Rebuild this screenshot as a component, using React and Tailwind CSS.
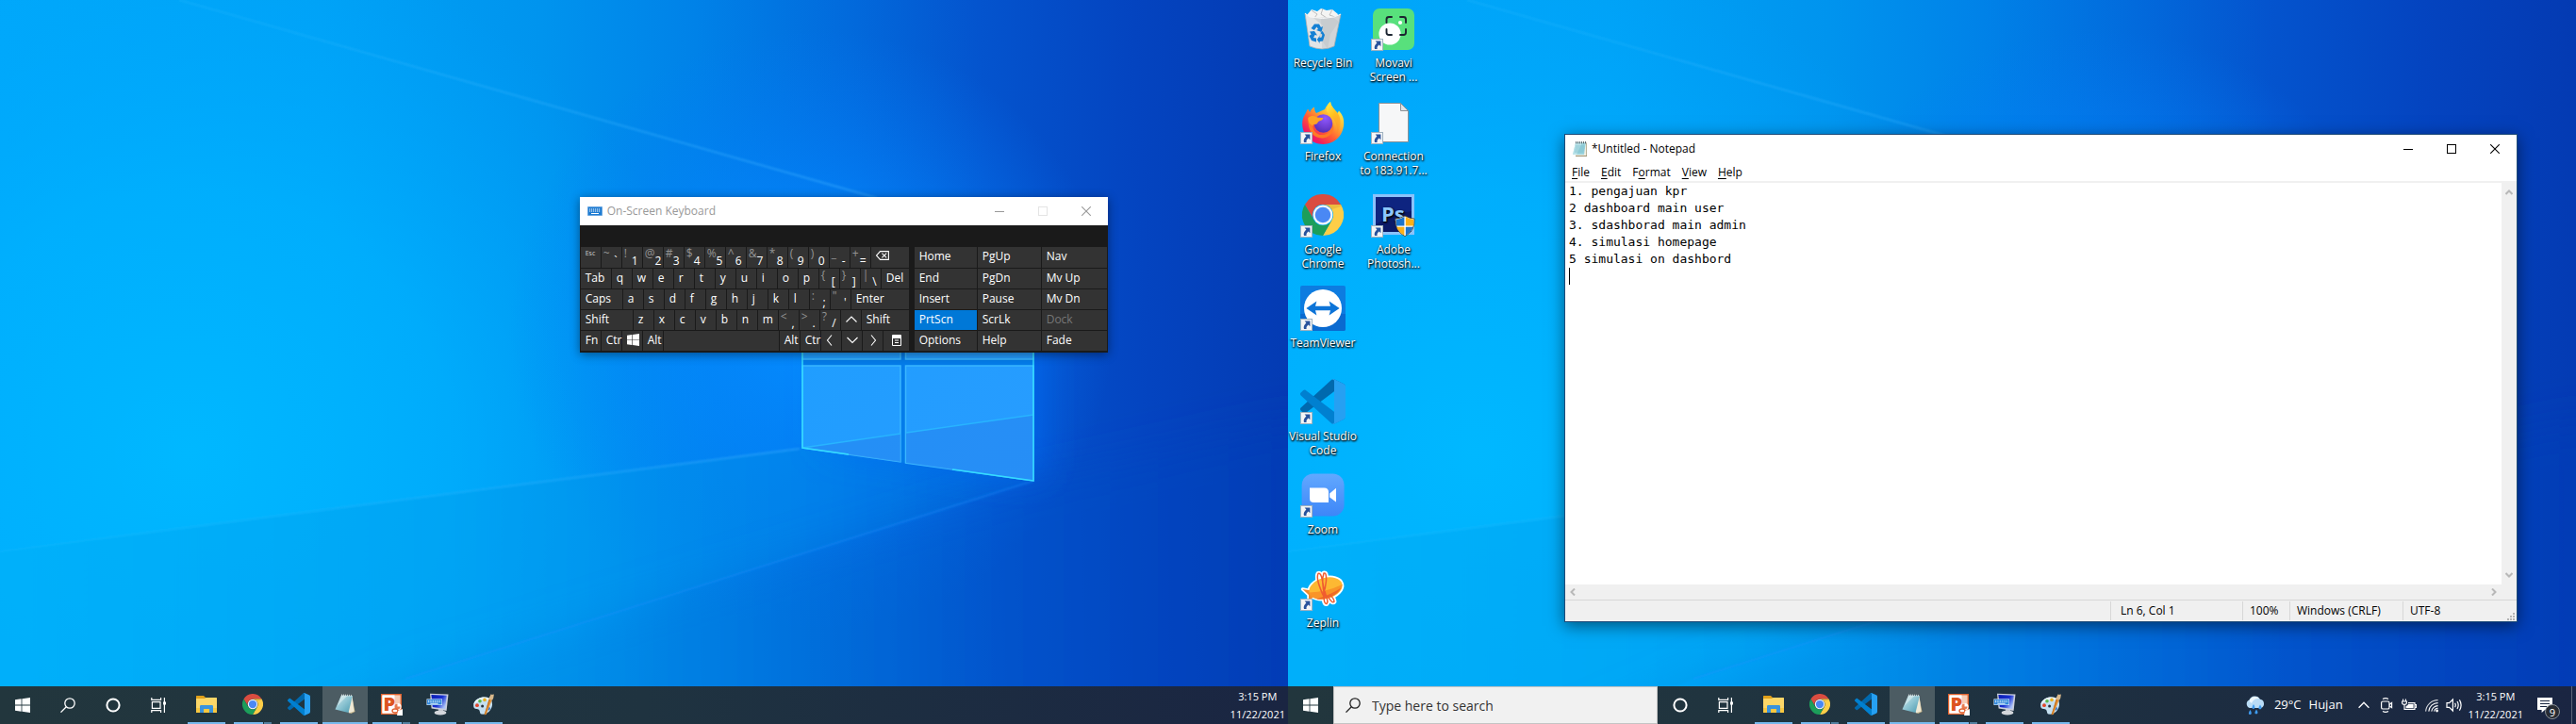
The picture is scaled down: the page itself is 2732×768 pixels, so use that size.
import { useId } from "react";

/* ---------- wallpaper ---------- */

function Wallpaper() {
  const id = useId();
  const u = (n) => `url(#${id}${n})`;
  return (
    <svg className="absolute inset-0 h-full w-full" viewBox="0 0 1366 768" preserveAspectRatio="none" aria-hidden="true">
      <defs>
        <linearGradient id={id + "base"} x1="0" y1="60" x2="1366" y2="0" gradientUnits="userSpaceOnUse">
          <stop offset="0" stopColor="#00a8fa" />
          <stop offset="0.25" stopColor="#00a2f6" />
          <stop offset="0.42" stopColor="#0094ee" />
          <stop offset="0.54" stopColor="#0082e8" />
          <stop offset="0.66" stopColor="#026adc" />
          <stop offset="0.76" stopColor="#0454ce" />
          <stop offset="0.88" stopColor="#0444c0" />
          <stop offset="1" stopColor="#043ab2" />
        </linearGradient>
        <radialGradient id={id + "cyan"} cx="200" cy="480" r="560" gradientUnits="userSpaceOnUse">
          <stop offset="0" stopColor="#00b8ff" />
          <stop offset="0.5" stopColor="#00b2ff" stopOpacity="0.7" />
          <stop offset="1" stopColor="#00a4ff" stopOpacity="0" />
        </radialGradient>
        <radialGradient id={id + "glow"} cx="860" cy="350" r="320" gradientUnits="userSpaceOnUse">
          <stop offset="0" stopColor="#058cff" />
          <stop offset="0.45" stopColor="#0486ff" stopOpacity="0.6" />
          <stop offset="1" stopColor="#0478f6" stopOpacity="0" />
        </radialGradient>
        <linearGradient id={id + "ray"} x1="0" y1="0" x2="1000" y2="0" gradientUnits="userSpaceOnUse">
          <stop offset="0" stopColor="#30c4ff" stopOpacity="0.15" />
          <stop offset="1" stopColor="#38a8ff" stopOpacity="0.6" />
        </linearGradient>
        <linearGradient id={id + "low"} x1="0" y1="0" x2="1366" y2="0" gradientUnits="userSpaceOnUse">
          <stop offset="0" stopColor="#00b0f8" />
          <stop offset="0.35" stopColor="#00a0f0" />
          <stop offset="0.62" stopColor="#0086e8" />
          <stop offset="0.8" stopColor="#0466dc" />
          <stop offset="1" stopColor="#0448c4" />
        </linearGradient>
        <linearGradient id={id + "under"} x1="0" y1="0" x2="1366" y2="0" gradientUnits="userSpaceOnUse">
          <stop offset="0.22" stopColor="#009cec" />
          <stop offset="0.45" stopColor="#0088e4" />
          <stop offset="0.62" stopColor="#006cd8" />
          <stop offset="0.8" stopColor="#0450c8" />
          <stop offset="1" stopColor="#043cb6" />
        </linearGradient>
        <linearGradient id={id + "pane"} x1="850" y1="300" x2="1096" y2="510" gradientUnits="userSpaceOnUse">
          <stop offset="0" stopColor="#1e9eff" />
          <stop offset="1" stopColor="#289cff" />
        </linearGradient>
        <filter id={id + "b1"} x="-5%" y="-5%" width="110%" height="110%">
          <feGaussianBlur stdDeviation="1" />
        </filter>
        <filter id={id + "b2"} x="-30%" y="-30%" width="160%" height="160%">
          <feGaussianBlur stdDeviation="20" />
        </filter>
      </defs>
      <rect width="1366" height="768" fill={u("base")} />
      <rect width="1366" height="768" fill={u("cyan")} />
      <rect width="1366" height="768" fill={u("glow")} />
      <path d="M-20 588 L848 476 L1096 510 L430 720 L270 790 H-20Z" fill={u("low")} fillOpacity="0.6" filter={u("b1")} />
      <path d="M1096 510 L430 720 L270 790 H1390 V440Z" fill={u("under")} fillOpacity="0.55" filter={u("b2")} />
      <path d="M190 0 L930 210" stroke={u("ray")} strokeWidth="2" filter={u("b1")} />
      <path d="M0 585 L848 476" stroke={u("ray")} strokeWidth="2" filter={u("b1")} />
      <path d="M1096 510 L430 720" stroke="#1e90ff" strokeOpacity="0.4" strokeWidth="2" filter={u("b1")} />
      <path d="M880 260 H1100 V500 L880 470Z" fill="#0468f4" fillOpacity="0.8" filter={u("b2")} />
      <path d="M850 240 H1096 V510 L850 476Z" fill="#047cea" />
      <g fill={u("pane")} stroke="#3ab6ff" strokeWidth="1.5">
        <path d="M851 260 H955 V381 H851Z" />
        <path d="M960.500 250 H1096 V381 H960.500Z" />
        <path d="M851 388 H955 V490 L851 475Z" />
        <path d="M960.500 388 H1096 V510 L960.500 491Z" />
      </g>
      <path d="M851 475 L955 460 V490Z M961 459 L1096 440 V510 L961 491Z" fill="#2684ee" fillOpacity="0.55" />
      <path d="M851 475 L955 460 M961 459 L1096 440" stroke="#28b4ff" strokeWidth="1.500" />
      <path d="M851 300 V475 L900 482 M1096 250 V510 L1010 498" fill="none" stroke="#34dcff" strokeWidth="1.500" />
    </svg>
  );
}

/* ---------- icons ---------- */

function WindowsLogo({ className }) {
  return (
    <svg className={className} viewBox="0 0 16 16" fill="currentColor" aria-hidden="true">
      <path d="M0 2.2 6.6 1.3V7.6H0ZM7.4 1.2 16 0V7.6H7.4ZM0 8.4H6.6V14.7L0 13.8ZM7.4 8.4H16V16L7.4 14.8Z" />
    </svg>
  );
}

function SearchIcon() {
  return (
    <svg className="size-4 shrink-0" viewBox="0 0 16 16" fill="none" stroke="currentColor" strokeWidth="1.3" aria-hidden="true">
      <circle cx="10" cy="6" r="5.2" />
      <path d="M6.3 9.8.5 15.6" />
    </svg>
  );
}

function CortanaIcon() {
  return (
    <svg className="size-4" viewBox="0 0 16 16" fill="none" stroke="currentColor" strokeWidth="2" aria-hidden="true">
      <circle cx="8" cy="8" r="6.6" />
    </svg>
  );
}

function TaskViewIcon() {
  return (
    <svg className="size-4" viewBox="0 0 16 16" fill="none" stroke="currentColor" strokeWidth="1.2" aria-hidden="true">
      <path d="M.8 0V2.4H10.6V0M.8 16V13.6H10.6V16M1.4 4.6H10V11.4H1.4ZM14.4 0V16" />
      <path d="M13 4.5H16V7.5H13Z" fill="currentColor" stroke="none" />
    </svg>
  );
}

function FolderIcon() {
  return (
    <svg className="size-6" viewBox="0 0 24 24" aria-hidden="true">
      <path d="M1 3.4Q1 3 1.4 3H9L11 5H21V8H1Z" fill="#e0a01a" />
      <path d="M1 6H10L11.5 5H22.6Q23 5 23 5.4V20.6Q23 21 22.6 21H1.4Q1 21 1 20.6Z" fill="#fcd768" />
      <path d="M1 16H23V20.6Q23 21 22.6 21H1.4Q1 21 1 20.6Z" fill="#f9c840" />
      <path d="M5 21V14.2Q5 13 6.2 13H17.8Q19 13 19 14.2V21H15V17H9V21Z" fill="#3a93dd" />
    </svg>
  );
}

function ChromeIcon({ className }) {
  return (
    <svg className={className} viewBox="0 0 48 48" aria-hidden="true">
      <path d="M24 12H44.8A24 24 0 0 0 3.2 12L13.6 30A12 12 0 0 1 24 12Z" fill="#da4c40" />
      <path d="M34.4 30 24 48A24 24 0 0 0 44.8 12H24A12 12 0 0 1 34.4 30Z" fill="#fdce48" />
      <path d="M13.6 30 3.2 12A24 24 0 0 0 24 48L34.4 30A12 12 0 0 1 13.6 30Z" fill="#1c9e5a" />
      <path d="M24 12H44.8L45.6 14 34 17.6Z" fill="#c99a30" fillOpacity="0.35" />
      <circle cx="24" cy="24" r="11.4" fill="#f4f6f8" />
      <circle cx="24" cy="24" r="9" fill="#4a88f4" />
    </svg>
  );
}

function VSCodeIcon({ className }) {
  return (
    <svg className={className} viewBox="0 0 100 100" aria-hidden="true">
      <path d="M96.46 10.8 75.86.88C73.47-.27 70.62.21 68.75 2.08L1.3 63.58C-.52 65.24-.51 68.09 1.3 69.75L6.81 74.75C8.3 76.1 10.53 76.2 12.13 74.99L93.36 13.37C96.09 11.3 100 13.25 100 16.67V16.43C100 14.03 98.62 11.84 96.46 10.8Z" fill="#0069ae" />
      <path d="M96.46 89.2 75.86 99.12C73.47 100.27 70.62 99.79 68.75 97.92L1.3 36.42C-.52 34.76-.51 31.91 1.3 30.25L6.81 25.25C8.3 23.9 10.53 23.8 12.13 25.01L93.36 86.63C96.09 88.7 100 86.75 100 83.33V83.57C100 85.97 98.62 88.16 96.46 89.2Z" fill="#0080d0" />
      <path d="M75.86 99.13C73.47 100.27 70.62 99.79 68.75 97.92 71.06 100.22 75 98.59 75 95.33V4.67C75 1.41 71.06-.22 68.75 2.08 70.62.21 73.47-.27 75.86.87L96.46 10.78C98.62 11.82 100 14.01 100 16.41V83.59C100 85.99 98.62 88.18 96.46 89.22Z" fill="#26a0f2" />
    </svg>
  );
}

function NotepadTaskIcon() {
  const id = useId();
  return (
    <svg className="size-6" viewBox="0 0 24 24" aria-hidden="true">
      <defs>
        <linearGradient id={id} x1="0" y1="0" x2="1" y2="1">
          <stop offset="0" stopColor="#cfe6ea" />
          <stop offset="0.5" stopColor="#8cc4d2" />
          <stop offset="1" stopColor="#4a98ae" />
        </linearGradient>
      </defs>
      <path d="M19 3 22.5 20 18 22 15.5 20Z" fill="#cdbb8e" />
      <path d="M19.5 3 21.5 19.5 16 21.5 15 19Z" fill="#efe9d6" />
      <path d="M8 2.5 20 3 15.5 21 1.5 17.5Z" fill={`url(#${id})`} />
      <path d="M3.5 14 8 2.8 14.5 3Z" fill="#e4f2f4" fillOpacity="0.55" />
      <path d="M8.5 1.5V3.4M10.5 1.5V3.5M12.5 1.6V3.5M14.5 1.7V3.6M16.5 1.8V3.7M18.5 1.9V3.8" stroke="#dfe5e5" strokeWidth="0.8" />
    </svg>
  );
}

function NotepadTitleIcon() {
  return (
    <svg className="size-4" viewBox="0 0 16 16" aria-hidden="true">
      <path d="M4 1.5H15V16H3Z" fill="#9a9070" />
      <path d="M4 1.5H14.4V15H3Z" fill="#f1eee2" />
      <path d="M3 1.5H13.8L12 14H0Z" fill="#9bd4de" />
      <path d="M3 1.5H10L4 14H0Z" fill="#c8e9ee" fillOpacity="0.7" />
      <path d="M3 5H12.6M2.6 7H12.4M2.2 9H12M1.8 11H11.6" stroke="#6cb4c4" strokeWidth="0.6" />
      <path d="M3.5 0V2.4M5.5 0V2.4M7.5 0V2.4M9.5 0V2.4M11.5 0V2.4M13.5 0V2.4" stroke="#41525a" strokeWidth="0.8" />
    </svg>
  );
}

function PowerPointIcon() {
  return (
    <svg className="size-6" viewBox="0 0 24 24" aria-hidden="true">
      <rect x="1" y="1" width="22" height="22" fill="#e0622e" />
      <rect x="2.4" y="2.4" width="19.2" height="19.2" fill="#f6cdb8" />
      <path d="M2.4 2.4H15.500V21.600H2.400Z" fill="#fff" />
      <text x="3.400" y="18.600" fontFamily="Open Sans, sans-serif" fontWeight="800" fontSize="20" fill="#dd5420">P</text>
      <circle cx="19" cy="14.500" r="3.600" fill="#fff" />
      <path d="M18.500 14.500V11.500A3 3 0 1 0 21.500 14.500Z" fill="#e87a50" />
      <ellipse cx="16" cy="19" rx="3" ry="2" fill="#fff" stroke="#e06030" strokeWidth="1.300" />
      <path d="M19 19.500 24 17V24H18Z" fill="#fff" />
    </svg>
  );
}

function OskTaskIcon() {
  const id = useId();
  return (
    <svg className="size-6" viewBox="0 0 24 24" aria-hidden="true">
      <defs>
        <linearGradient id={id} x1="0" y1="0" x2="1" y2="0.6">
          <stop offset="0" stopColor="#0a1cb4" />
          <stop offset="0.6" stopColor="#1830d0" />
          <stop offset="1" stopColor="#a8c0f8" />
        </linearGradient>
      </defs>
      <path d="M13 17H18V21H13Z" fill="#b8bcc4" />
      <ellipse cx="15" cy="21" rx="6.4" ry="2.4" fill="#d4d7dc" />
      <path d="M4 .8 23.5 1.5 21.6 19 5.6 16.4Z" fill="#ccd0dc" />
      <path d="M5.4 2 21.8 2.8 20.2 17 6.8 15Z" fill={`url(#${id})`} />
      <path d="M.5 6.4H17V13H.5Z" fill="#dcecfc" />
      <path d="M1.1 7H16.4V12.4H1.1Z" fill="#2a84da" />
      <path d="M2 8.4H15.6M2 9.8H15.6" stroke="#fff" strokeWidth="0.8" strokeDasharray="1 0.7" />
      <path d="M4.4 11.3H12.6" stroke="#fff" strokeWidth="0.8" />
    </svg>
  );
}

function PaintIcon() {
  return (
    <svg className="size-6" viewBox="0 0 24 24" aria-hidden="true">
      <path d="M11 4.6C18 3.6 21.6 8 21 13 20.2 19 15 23.4 9.6 22.6 7.4 22.2 8.6 18.6 6.4 17.6 4.4 16.8 1.6 17.6 1.2 14 .8 9 5.4 5.4 11 4.6Z" fill="#c4dff0" />
      <path d="M11 4.6C16 4 19.6 6 20.8 9.6 16 5.6 8 6 1.4 12.4 2 8.4 6 5.3 11 4.6Z" fill="#eaf5fb" />
      <circle cx="5" cy="13.2" r="1.9" fill="#e2452a" />
      <circle cx="8" cy="8.8" r="1.8" fill="#58b84a" />
      <circle cx="13" cy="7.4" r="1.8" fill="#e8b020" />
      <circle cx="10.6" cy="14" r="1.5" fill="#26323e" />
      <circle cx="17" cy="16.6" r="1.9" fill="#2d78d6" />
      <path d="M12.6 23.2 17.8 6.6 20.8 7.6 14.6 23Z" fill="#e8963a" />
      <path d="M12.6 23.2 17.8 6.6 19 7 13.6 23Z" fill="#c26e1c" />
      <path d="M17.6 6.8C17.4 4.4 19 3.6 19.6 1.2 20.4 2.4 21.4 1.6 23 1.4 22.2 3.4 23.2 4.8 21 7.8Z" fill="#d9b98c" />
    </svg>
  );
}

function RecycleBinIcon() {
  return (
    <svg className="size-12" viewBox="0 0 48 48" aria-hidden="true">
      <path d="M7 10 12 4 18 6 22 3 28 5 34 4 40 9 38 15H8Z" fill="#f4f4f3" />
      <path d="M12 5 18 9 15 13M24 3 22 9 28 13M34 4 31 10 37 12" fill="none" stroke="#bcbcbc" strokeWidth="1" />
      <path d="M5 8 10 43Q24 49 36 43L43 9 35 12 22 13.5 10 12Z" fill="#d2d5d8" />
      <path d="M5 8 10 43Q16 46 23 46L22 13.5 10 12Z" fill="#e2e4e6" />
      <path d="M14 13 24 21 20 32 29 46 32 30 41 17 34 12Z" fill="#c0c4c8" fillOpacity="0.55" />
      <path d="M5 8 10 43Q24 49 36 43L43 9" fill="none" stroke="#a3adb4" strokeWidth="0.8" />
      <path d="M5 8 10 12Q24 15 36 12L43 9" fill="none" stroke="#f6f7f8" strokeWidth="1" />
      <g fill="#1480d4">
        <path d="M11.5 24 15 19.5H20L22 23 24 22 22.5 28 17 26 19 25 17.5 22.5 14.8 26Z" />
        <path d="M10 27.5 15 27 18 31.5 15.6 31 14 34 17 34.5V38.5L12 37 9.4 32 11.6 30.5Z" />
        <path d="M23.6 27 26 31 24 37.5 20.6 38V40L17.8 36 20.6 32V34L22.6 33.5 23.4 30.8 21.4 29Z" />
      </g>
    </svg>
  );
}

function MovaviIcon() {
  return (
    <svg className="size-12" viewBox="0 0 48 48" aria-hidden="true">
      <rect x="2" y="3" width="44" height="44" rx="7" fill="#58e07c" />
      <circle cx="20" cy="30" r="11.6" fill="#fff" />
      <path d="M16.5 18V14.5Q16.5 12 19 12H22M31 12H34.5Q37 12 37 14.5V18M37 25V28.5Q37 31 34.5 31H31M22 31H19Q16.5 31 16.5 28.5V25" fill="none" stroke="#1c2430" strokeWidth="1.9" strokeLinecap="round" />
      <circle cx="31" cy="18" r="2.1" fill="#fff" />
    </svg>
  );
}

function FirefoxIcon() {
  const id = useId();
  return (
    <svg className="size-12" viewBox="0 0 48 48" aria-hidden="true">
      <defs>
        <linearGradient id={id + "f"} x1="0.85" y1="0.1" x2="0.15" y2="0.95">
          <stop offset="0" stopColor="#fff44f" />
          <stop offset="0.3" stopColor="#ffb430" />
          <stop offset="0.6" stopColor="#ff5a36" />
          <stop offset="0.85" stopColor="#f01c60" />
          <stop offset="1" stopColor="#e31587" />
        </linearGradient>
        <linearGradient id={id + "y"} x1="0" y1="0" x2="0.4" y2="1">
          <stop offset="0" stopColor="#fff050" />
          <stop offset="0.5" stopColor="#ffc020" />
          <stop offset="1" stopColor="#ff8020" stopOpacity="0.2" />
        </linearGradient>
        <radialGradient id={id + "g"} cx="0.6" cy="0.2" r="0.9">
          <stop offset="0" stopColor="#9059ff" />
          <stop offset="0.6" stopColor="#6c3cd0" />
          <stop offset="1" stopColor="#4a2cae" />
        </radialGradient>
      </defs>
      <path d="M8 10.5C9 12 9.6 13 10.2 14 11 11.6 13 9.6 15 8.6 14.8 10.6 15.4 13.4 17 15L26 11C27.6 7.4 29.6 5 32 3 32.4 8 37 11.6 39.6 15L41 12.6C45 17 46.4 21 46.2 26.6 45.4 39.4 36 48 24.4 48 11.4 48 2.4 38.6 2.2 26.6 2 20 5 17 6 14.4Z" fill={`url(#${id}f)`} />
      <path d="M28 13C27.6 8 29.6 5 32 3 32.4 8 37 11.6 39.6 15 44 21 43.6 31 38 38 41 28 36 21 32 18.4Z" fill={`url(#${id}y)`} />
      <path d="M8.400 20C11 17.600 14.600 17.400 17.600 19.200 19.600 20 22 19.800 24.400 20 24 22.200 21.600 23 20 23.600 18.400 24.400 18.600 26 17.200 26.600 15 27.600 13.400 26.200 13.400 28.400 13 33 18 38.400 23 38 30 38 34.600 33 34 26 37.400 31 34 40.600 24 41.400 14 42 7.600 34 8.400 20Z" fill="#ff7a26" />
      <circle cx="24.500" cy="26" r="9.800" fill={`url(#${id}g)`} />
      <path d="M8.400 20C11 17.600 14.600 17.400 17.600 19.200 19.600 20 22 19.800 24.400 20 24 22.200 21.600 23 20 23.600 18.400 24.400 18.600 26 17.200 26.600 15 27.600 13.400 26.200 13.400 28.400 10 27 8 24 8.400 20Z" fill="#ffa224" />
    </svg>
  );
}

function BlankFileIcon() {
  return (
    <svg className="size-12" viewBox="0 0 48 48" aria-hidden="true">
      <path d="M8.5 4.5H31L39.5 13V45.5H8.5Z" fill="#f6f7f8" stroke="#8b9196" />
      <path d="M31.5 4.5V12.5H39.5Z" fill="#e0e4e8" stroke="#8b9196" strokeLinejoin="round" />
    </svg>
  );
}

function PhotoshopIcon() {
  return (
    <svg className="size-12" viewBox="0 0 48 48" aria-hidden="true">
      <rect x="2" y="2" width="44" height="43" fill="#8cc2fa" />
      <rect x="5" y="5" width="38" height="37" fill="#0b1a68" />
      <path d="M5 5H43V20Q24 22 5 34Z" fill="#0e2480" />
      <text x="11" y="31" fontFamily="Open Sans, sans-serif" fontWeight="700" fontSize="22" fill="#8cc6fc">Ps</text>
      <path d="M36 25Q41 28 46 28 47 41 36 46.6 25 41 26 28 31 28 36 25Z" fill="#fff" stroke="#4a3a14" strokeWidth="0.8" />
      <path d="M35.4 26Q31 28.8 26.8 28.8V35.4H35.4ZM36.8 36.8H44.6Q43 42.6 36.8 45.6Z" fill="#1c74cc" />
      <path d="M36.8 26Q41 28.8 45.2 28.8V35.4H36.8ZM35.4 36.8H27.4Q29 42.6 35.4 45.6Z" fill="#fbb018" />
    </svg>
  );
}

function TeamViewerIcon() {
  return (
    <svg className="size-12" viewBox="0 0 48 48" aria-hidden="true">
      <rect width="48" height="48" rx="2" fill="#0d7ce0" />
      <path d="M0 30H48V46Q48 48 46 48H2Q0 48 0 46Z" fill="#0a6ad0" />
      <circle cx="24" cy="24" r="20" fill="#fff" />
      <path d="M6.4 24 17.4 16.6 16 21.8H32L30.6 16.6 41.6 24 30.6 31.4 32 26.2H16L17.4 31.4Z" fill="#0d74d8" />
    </svg>
  );
}

function ZoomIcon() {
  const id = useId();
  return (
    <svg className="size-12" viewBox="0 0 48 48" aria-hidden="true">
      <defs>
        <linearGradient id={id} x1="0" y1="0" x2="0" y2="1">
          <stop offset="0" stopColor="#62a8ff" />
          <stop offset="1" stopColor="#3d86f8" />
        </linearGradient>
      </defs>
      <rect x="1.6" y="1.6" width="45" height="45" rx="12" fill={`url(#${id})`} />
      <path d="M10 16.4H25.4Q30 16.4 30 21V32H14.4Q10 32 10 27.4Z" fill="#fff" />
      <path d="M31.2 22.4 38 16.8V31.6L31.2 26.4Z" fill="#fff" />
    </svg>
  );
}

function ZeplinIcon() {
  const wings = "M25.500 34Q16 14 19 8.500 22 7 23.500 16 25 26 28 34M26 33Q22 16 25 8 28 7 27.500 16 27 24 24 31M25 32Q25 41 28 40.500 30 38 27.500 33M29 32Q34 41 36 38 35.500 34 31 31";
  return (
    <svg className="size-12" viewBox="0 0 48 48" aria-hidden="true">
      <g fill="#fff" stroke="#fff" strokeWidth="3.500" strokeLinejoin="round">
        <path d="M2.500 25 10 26.500 12 33 9 38 9 31Z" />
        <ellipse cx="27" cy="24" rx="18" ry="11" transform="rotate(-15 27 24)" />
      </g>
      <path d={wings} fill="none" stroke="#fff" strokeWidth="5" strokeLinejoin="round" />
      <path d="M2.500 25 12 26.500 14 33 9 38 9 31Z" fill="#f08a2c" />
      <ellipse cx="27" cy="24" rx="18" ry="11" transform="rotate(-15 27 24)" fill="#fdb833" />
      <path d="M9.600 28.600Q28 28 44.600 20C44 27 36 32.600 27 34.800 17 37 10 34 9.600 28.600Z" fill="#f99428" />
      <path d="M17 35.500Q34 30 43.400 23.500C40 30 34 33 27 34.800Q21 36.200 17 35.500Z" fill="#ee6a28" />
      <path d={wings} fill="none" stroke="#f05c30" strokeWidth="1.500" />
    </svg>
  );
}

function ShortcutArrow() {
  return (
    <svg className="absolute bottom-0 left-0 size-[13px]" viewBox="0 0 13 13" aria-hidden="true">
      <rect x="0.5" y="0.5" width="12" height="12" fill="#f4f5f6" stroke="#9fb2c0" />
      <path d="M4.6 2.4H10.4V8.2L8.6 6.6C7 7.8 6.2 9 6.6 11H4C3 8.4 4.4 6.2 6.4 4.4Z" fill="#28529c" />
    </svg>
  );
}

/* ---------- taskbar ---------- */

const pinned = [
  { name: "File Explorer", icon: <FolderIcon />, mode: "single" },
  { name: "Google Chrome", icon: <ChromeIcon className="size-[22px]" />, mode: "stack" },
  { name: "Visual Studio Code", icon: <VSCodeIcon className="size-6" />, mode: "single" },
  { name: "Notepad", icon: <NotepadTaskIcon />, mode: "active" },
  { name: "PowerPoint", icon: <PowerPointIcon />, mode: "stack" },
  { name: "On-Screen Keyboard", icon: <OskTaskIcon />, mode: "single" },
  { name: "Paint", icon: <PaintIcon />, mode: "single" },
];

function BarButton({ label, children }) {
  return (
    <button type="button" aria-label={label} className="flex h-10 w-12 shrink-0 items-center justify-center">
      {children}
    </button>
  );
}

function PinnedApps() {
  return (
    <div className="ml-[3px] flex gap-px">
      {pinned.map((app) => (
        <button
          key={app.name}
          type="button"
          aria-label={app.name}
          className={
            "flex h-10 w-12 shrink-0 flex-col items-center " + (app.mode === "active" ? "bg-[#4c5c63]" : "")
          }
        >
          <span className="flex flex-1 items-center">{app.icon}</span>
          <span className={"flex h-0.5 gap-px " + (app.mode === "active" ? "w-full" : "w-10")}>
            <span className="flex-1 bg-[#76b9ed]" />
            {app.mode === "stack" && <span className="w-2 bg-[#527f9f]" />}
          </span>
        </button>
      ))}
    </div>
  );
}

function Clock() {
  return (
    <button type="button" className="h-10 px-[3px] text-center text-[11px] leading-[19px] whitespace-nowrap">
      3:15 PM
      <br />
      11/22/2021
    </button>
  );
}

function Tray() {
  return (
    <div className="ml-auto flex h-10 items-center">
      <button type="button" className="mr-2.5 flex items-center gap-2 text-[13px]">
        <svg className="size-6" viewBox="0 0 24 24" aria-hidden="true">
          <path d="M6 15A5 4.6 0 0 1 5.4 6.6 6.4 6.4 0 0 1 17 5.8 4.8 4.8 0 0 1 18 15Z" fill="#b9dcf6" />
          <path d="M5.6 8A6 6 0 0 1 16 5 8 8 0 0 0 8 10Z" fill="#eef8ff" />
          <path d="M10 11Q11.8 13.4 11.4 15A1.7 1.7 0 0 1 8.4 15Q8.4 13.4 10 11ZM17 11.4Q18.8 13.8 18.4 15.4A1.7 1.7 0 0 1 15.4 15.4Q15.4 13.8 17 11.4ZM6.4 17Q8.2 19.4 7.8 21A1.7 1.7 0 0 1 4.8 21Q4.8 19.4 6.4 17ZM13 16.4Q14.8 18.8 14.4 20.4A1.7 1.7 0 0 1 11.4 20.4Q11.4 18.8 13 16.4Z" fill="#3f9cf0" />
        </svg>
        <span>29°C</span>
        <span>Hujan</span>
      </button>
      <button type="button" aria-label="Show hidden icons" className="flex w-6 justify-center">
        <svg className="h-2 w-3" viewBox="0 0 12 8" fill="none" stroke="currentColor" strokeWidth="1.3">
          <path d="M.6 6.8 6 1.2 11.4 6.8" />
        </svg>
      </button>
      <button type="button" aria-label="Meet Now" className="flex w-6 justify-center">
        <svg className="size-4" viewBox="0 0 16 16" fill="none" stroke="currentColor" strokeWidth="1.2">
          <path d="M4 1.6Q7 -.2 10 1.6M4 14.4Q7 16.2 10 14.4" />
          <rect x="2.6" y="4" width="8.4" height="8" rx="1.6" />
          <path d="M11 7.4 13.6 5.4V10.6L11 8.8" />
        </svg>
      </button>
      <button type="button" aria-label="Battery" className="flex w-6 justify-center">
        <svg className="size-4" viewBox="0 0 16 16" fill="none" stroke="currentColor" strokeWidth="1.1">
          <path d="M1.6 1.500V4M4.400 1.500V4M.6 4H5.400V5.600Q5.400 7.400 3 7.400 .6 7.400 .6 5.600ZM3 7.400V12.400H14V5.600H7" />
          <path d="M14 7.600H15.600V10.400H14" />
          <path d="M7 7H12.600V11H4.600V9Q6.800 8.600 7 7Z" fill="currentColor" stroke="none" />
        </svg>
      </button>
      <button type="button" aria-label="Wi-Fi" className="flex w-6 justify-center">
        <svg className="size-4" viewBox="0 0 16 16" fill="none" stroke="currentColor" strokeWidth="1.1">
          <path d="M1.6 14.6A13 13 0 0 1 14.6 2.6" strokeOpacity="0.8" />
          <path d="M4.8 14.6A9.8 9.8 0 0 1 14.6 5.6M7.8 14.6A6.8 6.8 0 0 1 14.6 8.6M10.6 14.6A4 4 0 0 1 14.6 11.2" />
          <circle cx="13.6" cy="14" r="1.4" fill="currentColor" stroke="none" />
        </svg>
      </button>
      <button type="button" aria-label="Volume" className="flex w-6 justify-center">
        <svg className="h-4 w-[18px]" viewBox="0 0 18 16" fill="none" stroke="currentColor" strokeWidth="1.2">
          <path d="M1 5.6H3.6L7.4 2V14L3.6 10.4H1Z" />
          <path d="M9.6 5.8Q11 8 9.6 10.2M12 4Q14.4 8 12 12M14.4 2.4Q17.8 8 14.4 13.6" />
        </svg>
      </button>
      <Clock />
      <button type="button" aria-label="9 new notifications" className="relative flex h-10 w-12 items-center justify-center pr-2">
        <svg className="size-4" viewBox="0 0 16 16" aria-hidden="true">
          <path d="M0 0H16V13H8L4.6 16V13H0Z" fill="#fff" />
          <path d="M3 3.5H13M3 6.5H13M3 9.5H10" stroke="#1b2740" strokeWidth="1.2" />
        </svg>
        <span className="absolute top-[19px] left-[20px] flex size-4 items-center justify-center rounded-full border border-[#8a8f96] bg-[#272b33] text-[11px] leading-none">
          9
        </span>
      </button>
      <span className="h-10 w-[5px] border-l border-[#5d6678]" />
    </div>
  );
}

function Taskbar({ primary }) {
  return (
    <footer className="relative z-10 flex h-10 w-full items-center bg-linear-to-r from-[#22363d] via-[#1f3340] to-[#1a2542] text-white">
      <BarButton label="Start">
        <WindowsLogo className="size-4" />
      </BarButton>
      {primary ? (
        <label className="flex h-10 w-[344px] items-center gap-3 border border-[#c4c4c4] bg-[#f1f1f1] pl-3 text-[#222]">
          <SearchIcon />
          <input
            type="text"
            aria-label="Search"
            placeholder="Type here to search"
            className="w-full min-w-0 bg-transparent text-[14px] outline-none placeholder:text-[#333]"
          />
        </label>
      ) : (
        <BarButton label="Search">
          <SearchIcon />
        </BarButton>
      )}
      <BarButton label="Cortana">
        <CortanaIcon />
      </BarButton>
      <BarButton label="Task View">
        <TaskViewIcon />
      </BarButton>
      <PinnedApps />
      {primary ? (
        <Tray />
      ) : (
        <div className="ml-auto">
          <Clock />
        </div>
      )}
    </footer>
  );
}

/* ---------- windows ---------- */

function WindowButtons({ dimMax }) {
  const box = "flex h-full w-[46px] items-center justify-center";
  return (
    <div className="ml-auto flex h-full">
      <button type="button" aria-label="Minimize" className={box}>
        <svg className="size-2.5" viewBox="0 0 10 10" stroke="currentColor">
          <path d="M0 5.5H10" />
        </svg>
      </button>
      <button type="button" aria-label="Maximize" className={box + (dimMax ? " text-[#e4e4e4]" : "")}>
        <svg className="size-2.5" viewBox="0 0 10 10" fill="none" stroke="currentColor">
          <rect x="0.5" y="0.5" width="9" height="9" />
        </svg>
      </button>
      <button type="button" aria-label="Close" className={box}>
        <svg className="size-2.5" viewBox="0 0 10 10" stroke="currentColor" strokeWidth="1.1">
          <path d="M.2.2 9.8 9.8M9.8.2.2 9.8" />
        </svg>
      </button>
    </div>
  );
}

const S = "w-[21px] shrink-0";
const keyBase = "flex pl-[5px] text-left leading-[19px] whitespace-nowrap";

function Chevron({ d }) {
  return (
    <svg className="mt-1 size-3 shrink-0" viewBox="0 0 12 12" fill="none" stroke="currentColor" strokeWidth="1.1" aria-hidden="true">
      <path d={d} />
    </svg>
  );
}

const up = <Chevron d="M.5 8.5 6 3 11.5 8.5" />;
const down = <Chevron d="M.5 3 6 8.5 11.5 3" />;
const left = <Chevron d="M6 .5 1.5 6 6 11.5" />;
const right = <Chevron d="M4 .5 8.5 6 4 11.5" />;

const rows = [
  [
    { k: "Esc", tiny: true },
    { k: "`", s: "~" },
    { k: "1", s: "!" },
    { k: "2", s: "@" },
    { k: "3", s: "#" },
    { k: "4", s: "$" },
    { k: "5", s: "%" },
    { k: "6", s: "^" },
    { k: "7", s: "&" },
    { k: "8", s: "*" },
    { k: "9", s: "(" },
    { k: "0", s: ")" },
    { k: "-", s: "_" },
    { k: "=", s: "+" },
    {
      label: "Backspace",
      w: "flex-1",
      icon: (
        <svg className="mt-1 h-2.5 w-3.5 shrink-0" viewBox="0 0 14 10" fill="none" stroke="currentColor" strokeWidth="1.1" aria-hidden="true">
          <path d="M4.5.6H13.4V9.4H4.5L.6 5ZM6.4 2.6 11.2 7.4M11.2 2.6 6.4 7.4" />
        </svg>
      ),
    },
  ],
  [
    { k: "Tab", w: "w-8 shrink-0" },
    ..."qwertyuiop".split("").map((k) => ({ k })),
    { k: "[", s: "{" },
    { k: "]", s: "}" },
    { k: "\\", s: "|" },
    { k: "Del", w: "flex-1" },
  ],
  [
    { k: "Caps", w: "w-11 shrink-0" },
    ..."asdfghjkl".split("").map((k) => ({ k })),
    { k: ";", s: ":" },
    { k: "'", s: '"' },
    { k: "Enter", w: "flex-1" },
  ],
  [
    { k: "Shift", w: "w-[55px] shrink-0" },
    ..."zxcvbnm".split("").map((k) => ({ k })),
    { k: ",", s: "<" },
    { k: ".", s: ">" },
    { k: "/", s: "?" },
    { label: "Up", icon: up },
    { k: "Shift", w: "flex-1" },
  ],
  [
    { k: "Fn" },
    { k: "Ctrl" },
    { label: "Windows", icon: <WindowsLogo className="mt-[3px] size-[13px] shrink-0" /> },
    { k: "Alt" },
    { label: "Space", w: "flex-1" },
    { k: "Alt" },
    { k: "Ctrl" },
    { label: "Left", icon: left },
    { label: "Down", icon: down },
    { label: "Right", icon: right },
    {
      label: "Menu",
      w: "w-[27px] shrink-0",
      icon: (
        <svg className="mt-1 ml-1 h-3 w-2.5 shrink-0" viewBox="0 0 10 12" fill="none" stroke="currentColor" aria-hidden="true">
          <path d="M.5.5H9.5V11.5H.5ZM.5 3.5H9.5M3 6H7M3 8.5H7" />
          <path d="M.5 2H9.5" strokeWidth="2" />
        </svg>
      ),
    },
  ],
];

function Key({ def }) {
  if (def.s) {
    return (
      <button type="button" className={"flex justify-between bg-[#333] px-0.5 leading-[14px] " + S}>
        <span className="text-[#949494]">{def.s}</span>
        <span className="self-end pr-0.5">{def.k}</span>
      </button>
    );
  }
  return (
    <button type="button" aria-label={def.label} className={keyBase + " bg-[#333] " + (def.w || S)}>
      {def.tiny ? <span className="text-[7px] leading-[13px] text-[#ccc]">{def.k}</span> : def.icon || def.k}
    </button>
  );
}

const sideKeys = [
  ["Home", "PgUp", "Nav"],
  ["End", "PgDn", "Mv Up"],
  ["Insert", "Pause", "Mv Dn"],
  ["PrtScn", "ScrLk", "Dock"],
  ["Options", "Help", "Fade"],
];

function sideTone(k) {
  if (k === "PrtScn") return " bg-[#0078d7]";
  if (k === "Dock") return " bg-[#333] text-[#777]";
  return " bg-[#333]";
}

function OnScreenKeyboard() {
  return (
    <section className="absolute top-[209px] left-[45%] w-[560px] bg-[#1a1a1a] text-[12px] text-white shadow-[0_2px_10px_rgba(0,0,0,0.45)]">
      <header className="flex h-[30px] items-center bg-white pl-2 text-[#999]">
        <svg className="h-2.5 w-4" viewBox="0 0 16 10" aria-hidden="true">
          <rect width="16" height="10" fill="#9cc4ea" />
          <rect x="0.6" y="0.6" width="14.8" height="8.8" fill="#1e7cd2" />
          <path d="M2 3H14M2 5H14" stroke="#fff" strokeDasharray="1.2 0.8" />
          <path d="M4 7.5H12" stroke="#fff" />
        </svg>
        <h2 className="ml-[5px]">On-Screen Keyboard</h2>
        <WindowButtons dimMax />
      </header>
      <div className="flex gap-1.5 px-px pt-[23px] pb-0.5">
        <div className="grid w-[348px] shrink-0 grid-rows-[22px_repeat(4,21px)] gap-px">
          {rows.map((row, i) => (
            <div key={i} className="flex gap-px">
              {row.map((def, j) => (
                <Key key={j} def={def} />
              ))}
            </div>
          ))}
        </div>
        <div className="grid flex-1 grid-cols-[66px_67px_1fr] grid-rows-[22px_repeat(4,21px)] gap-px">
          {sideKeys.flat().map((k) => (
            <button key={k} type="button" disabled={k === "Dock"} className={keyBase + sideTone(k)}>
              {k}
            </button>
          ))}
        </div>
      </div>
    </section>
  );
}

const note = `1. pengajuan kpr
2 dashboard main user
3. sdashborad main admin
4. simulasi homepage
5 simulasi on dashbord
`;

function Arrow({ d }) {
  return (
    <svg className="size-2" viewBox="0 0 8 8" fill="none" stroke="#b8b8b8" strokeWidth="2" aria-hidden="true">
      <path d={d} />
    </svg>
  );
}

function Notepad() {
  const menu = [
    ["", "F", "ile"],
    ["", "E", "dit"],
    ["F", "o", "rmat"],
    ["", "V", "iew"],
    ["", "H", "elp"],
  ];
  return (
    <section className="absolute top-[142px] right-[62px] bottom-[68px] left-[293px] flex flex-col border border-[#1d4a78] bg-white text-[12px] text-black shadow-[0_4px_16px_rgba(0,0,0,0.5)]">
      <header className="flex h-[30px] shrink-0 items-center pl-2">
        <NotepadTitleIcon />
        <h2 className="ml-1">*Untitled - Notepad</h2>
        <WindowButtons />
      </header>
      <nav className="flex h-[19px] shrink-0 items-center pl-px">
        {menu.map(([a, b, c]) => (
          <button key={b} type="button" className="px-1.5 leading-[19px]">
            {a}
            <span className="underline underline-offset-2">{b}</span>
            {c}
          </button>
        ))}
      </nav>
      <div className="flex min-h-0 flex-1 border-t-2 border-[#f0f0f0]">
        <div className="relative flex flex-1">
          <textarea
            aria-label="Text editor"
            defaultValue={note}
            spellCheck={false}
            className="flex-1 resize-none overflow-hidden bg-white pl-1 font-['DejaVu_Sans_Mono',monospace] text-[13px] leading-[18px] outline-none"
          />
          <span className="absolute top-[90px] left-1 h-[18px] w-px bg-black" />
        </div>
        <div className="flex w-4 flex-col items-center justify-between bg-[#f0f0f0] py-1.5">
          <Arrow d="M.5 6 4 2.5 7.5 6" />
          <Arrow d="M.5 2 4 5.5 7.5 2" />
        </div>
      </div>
      <div className="flex h-4 shrink-0 items-center justify-between bg-[#f0f0f0] pr-5 pl-1">
        <Arrow d="M6 .5 2.5 4 6 7.5" />
        <Arrow d="M2 .5 5.5 4 2 7.5" />
      </div>
      <footer className="flex h-[23px] shrink-0 items-center justify-end border-t border-[#d7d7d7] bg-[#f0f0f0]">
        <span className="w-[140px] border-l border-[#d7d7d7] pl-2.5 leading-5">Ln 6, Col 1</span>
        <span className="w-[50px] border-l border-[#d7d7d7] pl-[7px] leading-5">100%</span>
        <span className="w-[120px] border-l border-[#d7d7d7] pl-[7px] leading-5">Windows (CRLF)</span>
        <span className="flex w-[121px] items-end justify-between border-l border-[#d7d7d7] pr-0.5 pl-[7px] leading-5">
          UTF-8
          <svg className="size-2" viewBox="0 0 8 8" fill="#b4b4b4" aria-hidden="true">
            <path d="M6 0H8V2H6ZM3 3H5V5H3ZM6 3H8V5H6ZM0 6H2V8H0ZM3 6H5V8H3ZM6 6H8V8H6Z" />
          </svg>
        </span>
      </footer>
    </section>
  );
}

/* ---------- desktop ---------- */

const shortcuts = [
  { lines: ["Recycle Bin"], icon: <RecycleBinIcon />, plain: true },
  { lines: ["Firefox"], icon: <FirefoxIcon /> },
  { lines: ["Google", "Chrome"], icon: <ChromeIcon className="m-0.5 size-11" /> },
  { lines: ["TeamViewer"], icon: <TeamViewerIcon /> },
  { lines: ["Visual Studio", "Code"], icon: <VSCodeIcon className="size-12" /> },
  { lines: ["Zoom"], icon: <ZoomIcon /> },
  { lines: ["Zeplin"], icon: <ZeplinIcon /> },
  { lines: ["Movavi", "Screen ..."], icon: <MovaviIcon /> },
  { lines: ["Connection", "to 183.91.7..."], icon: <BlankFileIcon /> },
  { lines: ["Adobe", "Photosh..."], icon: <PhotoshopIcon /> },
];

function DesktopIcons() {
  return (
    <ul className="relative grid w-fit auto-cols-[74px] grid-flow-col grid-rows-[repeat(7,99px)] gap-x-px">
      {shortcuts.map((s) => (
        <li key={s.lines[0]} className="flex justify-center">
          <a
            href="#"
            className="flex flex-col items-center pt-1.5 text-center text-[12px] leading-[15px] whitespace-nowrap text-white [text-shadow:0_1px_2px_#000,1px_1px_2px_#000]"
          >
            <span className="relative mb-[5px] size-12">
              {s.icon}
              {!s.plain && <ShortcutArrow />}
            </span>
            {s.lines.map((l) => (
              <span key={l}>{l}</span>
            ))}
          </a>
        </li>
      ))}
    </ul>
  );
}

function Monitor({ primary, children }) {
  return (
    <main className="relative flex min-h-screen flex-1 flex-col overflow-hidden">
      <Wallpaper />
      <div className="relative flex-1">{children}</div>
      <Taskbar primary={primary} />
    </main>
  );
}

export default function App() {
  return (
    <div className="flex min-h-screen font-['Open_Sans','Noto_Sans',sans-serif]">
      <Monitor>
        <OnScreenKeyboard />
      </Monitor>
      <Monitor primary>
        <DesktopIcons />
        <Notepad />
      </Monitor>
    </div>
  );
}
